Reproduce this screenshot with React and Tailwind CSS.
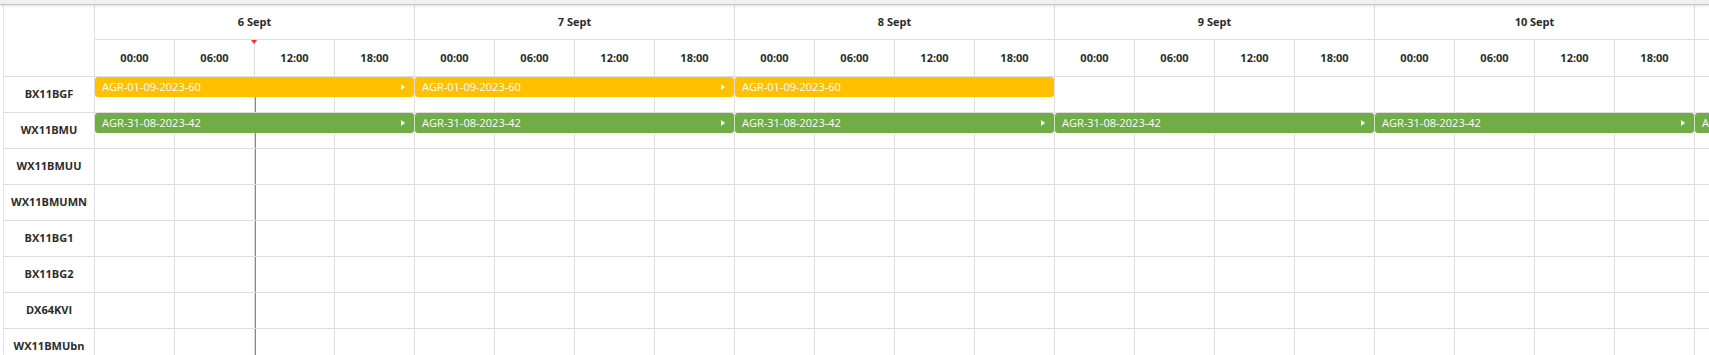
import React from 'react';

const days = ['6 Sept', '7 Sept', '8 Sept', '9 Sept', '10 Sept', ''];
const hours = ['00:00', '06:00', '12:00', '18:00'];

// resources shown down the left side
const rows = [
  { name: 'BX11BGF', bars: [{ label: 'AGR-01-09-2023-60', arrow: true }, { label: 'AGR-01-09-2023-60', arrow: true }, { label: 'AGR-01-09-2023-60', arrow: false }], color: 'bg-[#ffc000]' },
  { name: 'WX11BMU', bars: Array.from({ length: 6 }, () => ({ label: 'AGR-31-08-2023-42', arrow: true })), color: 'bg-[#70ad47]' },
  { name: 'WX11BMUU', bars: [] },
  { name: 'WX11BMUMN', bars: [] },
  { name: 'BX11BG1', bars: [] },
  { name: 'BX11BG2', bars: [] },
  { name: 'DX64KVI', bars: [] },
  { name: 'WX11BMUbn', bars: [] },
];

function HourCells({ className = '' }) {
  return (
    <div className="flex">
      {days.map((d, di) => (
        <div key={di} className="flex shrink-0">
          {hours.map((h) => (
            <div key={h} className={`w-[80px] shrink-0 border-r border-[#dedede] ${className}`} />
          ))}
        </div>
      ))}
    </div>
  );
}

export default function App() {
  return (
    <div
      className="w-[1709px] h-[355px] overflow-hidden bg-white text-[#2b2b2b]"
      style={{ fontFamily: '"Open Sans", "Liberation Sans", sans-serif' }}
    >
      {/* top strip */}
      <div className="h-[5px] bg-[#f0f0f0] border-b border-[#c4c4c4] shadow-[0_1px_3px_rgba(0,0,0,0.12)] relative z-20" />

      <div className="flex ml-[3px] border-l border-[#e4e4e4]">
        {/* resource column */}
        <div className="w-[91px] shrink-0 border-r border-[#dedede]">
          <div className="h-[72px] border-b border-[#dedede]" />
          {rows.map((r) => (
            <div
              key={r.name}
              className="h-[36px] border-b border-[#dedede] flex items-center justify-center text-[11px] font-bold"
            >
              {r.name}
            </div>
          ))}
        </div>

        {/* timeline */}
        <div className="flex-1 min-w-0 overflow-hidden">
          {/* day header */}
          <div className="flex">
            {days.map((d, i) => (
              <div
                key={i}
                className="w-[320px] h-[35px] shrink-0 border-r border-b border-[#dedede] flex items-center justify-center text-[11px] font-bold"
              >
                {d}
              </div>
            ))}
          </div>

          {/* hour header */}
          <div className="relative flex">
            {days.map((d, di) => (
              <div key={di} className="flex shrink-0">
                {hours.map((h) => (
                  <div
                    key={h}
                    className="w-[80px] h-[37px] shrink-0 border-r border-b border-[#dedede] flex items-center justify-center text-[11px] font-bold"
                  >
                    {di < 5 ? h : ''}
                  </div>
                ))}
              </div>
            ))}
            {/* now marker */}
            <div className="absolute top-0 left-[156px] w-0 h-0 border-x-[3px] border-x-transparent border-t-[4px] border-t-[#ff2a2a]" />
          </div>

          {/* body */}
          <div className="relative">
            <div className="absolute top-0 bottom-0 left-[159px] w-[2px] bg-[#ff5252]" />
            {rows.map((r) => (
              <div key={r.name} className="relative h-[36px] border-b border-[#dedede]">
                <HourCells className="h-[35px]" />
                <div className="absolute inset-x-0 top-0 z-10 flex gap-[1px]">
                  {r.bars.map((b, i) => (
                    <div
                      key={i}
                      className={`w-[319px] h-[20px] shrink-0 rounded-[3px] ${r.color} flex items-center justify-between pl-[7px] pr-[9px] text-[11px] text-white`}
                    >
                      <span className="whitespace-nowrap">{b.label}</span>
                      {b.arrow && (
                        <span className="w-0 h-0 border-y-[3px] border-y-transparent border-l-[4px] border-l-white" />
                      )}
                    </div>
                  ))}
                </div>
              </div>
            ))}
          </div>
        </div>
      </div>
    </div>
  );
}
